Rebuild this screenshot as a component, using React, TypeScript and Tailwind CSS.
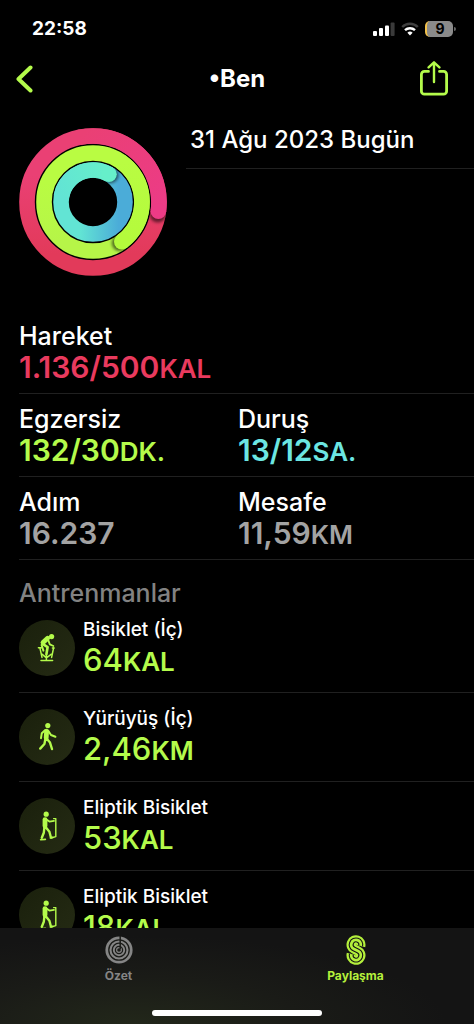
import type { ReactNode } from "react";

const rings = [
  { id: "move", radius: 66, angle: 98, from: "#ea4074", to: "#e23a5a", tip: "#ec3b86", dir: "vertical" },
  { id: "exercise", radius: 49, angle: 144, from: "#b9fc42", to: "#b6f548", tip: "#b4fb3c", dir: "vertical" },
  { id: "stand", radius: 32, angle: 30, from: "#62e4d4", to: "#4bacd8", tip: "#66efca", dir: "horizontal" },
];

const workouts = [
  { name: "Bisiklet (İç)", value: "64", unit: "KAL", icon: "bike" },
  { name: "Yürüyüş (İç)", value: "2,46", unit: "KM", icon: "walk" },
  { name: "Eliptik Bisiklet", value: "53", unit: "KAL", icon: "elliptical" },
  { name: "Eliptik Bisiklet", value: "18", unit: "KAL", icon: "elliptical" },
];

const sharePath = "M14.640 10.940A4.800 4.800 0 1 0 7.970 14.050L12.030 15.950A4.800 4.800 0 1 1 5.360 19.060";

function point(radius: number, angle: number) {
  const rad = ((angle - 90) * Math.PI) / 180;
  return { x: 74 + radius * Math.cos(rad), y: 74 + radius * Math.sin(rad) };
}

function ActivityRings() {
  return (
    <svg viewBox="0 0 148 148" className="h-[148px] w-[148px]" role="img" aria-label="Halkalar">
      <defs>
        <filter id="soft" x="-50%" y="-50%" width="200%" height="200%">
          <feGaussianBlur stdDeviation="1.8" />
        </filter>
      </defs>
      {rings.map((ring) => {
        const start = point(ring.radius, ring.angle - 110);
        const end = point(ring.radius, ring.angle);
        const shadow = point(ring.radius, ring.angle + 3);
        const horizontal = ring.dir === "horizontal";
        return (
          <g key={ring.id} fill="none">
            <linearGradient id={`${ring.id}-base`} x1="0" y1="0" x2={horizontal ? "1" : "0"} y2={horizontal ? "0" : "1"}>
              <stop offset="0.3" stopColor={ring.from} />
              <stop offset="0.9" stopColor={ring.to} />
            </linearGradient>
            <linearGradient
              id={`${ring.id}-tip`}
              gradientUnits="userSpaceOnUse"
              x1={start.x}
              y1={start.y}
              x2={end.x}
              y2={end.y}
            >
              <stop offset="0" stopColor={ring.from} />
              <stop offset="1" stopColor={ring.tip} />
            </linearGradient>
            <mask id={`${ring.id}-mask`} maskUnits="userSpaceOnUse" x="0" y="0" width="148" height="148">
              <circle cx="74" cy="74" r={ring.radius} stroke="white" strokeWidth="15.6" />
            </mask>
            <circle cx="74" cy="74" r={ring.radius} stroke={`url(#${ring.id}-base)`} strokeWidth="15.6" />
            <g mask={`url(#${ring.id}-mask)`}>
              <circle cx={shadow.x} cy={shadow.y} r="8" fill="#000" fillOpacity="0.55" filter="url(#soft)" />
            </g>
            <path
              d={`M${start.x} ${start.y}A${ring.radius} ${ring.radius} 0 0 1 ${end.x} ${end.y}`}
              stroke={`url(#${ring.id}-tip)`}
              strokeWidth="15.6"
            />
            <circle cx={end.x} cy={end.y} r="7.8" fill={ring.tip} />
          </g>
        );
      })}
    </svg>
  );
}

function WorkoutIcon({ name }: { name: string }) {
  return (
    <svg viewBox="0 0 56 56" className="h-14 w-14" fill="none" stroke="#b4fb4b" strokeLinecap="round" strokeLinejoin="round">
      {name === "bike" && (
        <>
          <circle cx="32.6" cy="16.6" r="2.6" fill="#b4fb4b" stroke="none" />
          <path d="M28.6 18.2L24 22.6" strokeWidth="4.8" />
          <path d="M29.4 20.4l1.400 4 3.600 1.600" strokeWidth="1.8" />
          <path d="M24 24.200l4.600 3-1.200 7" strokeWidth="2.6" />
          <path d="M22.600 25l1.800 5.600" strokeWidth="2" />
          <path d="M19.400 27.800h3M21 28.400l2 9M34.600 27.800l-2 9.600M33.400 28h1.800" strokeWidth="1.5" />
          <path d="M23 34.200l4.400 3.600 5-3.600M27.400 35v5M22 40.400h11.600" strokeWidth="1.5" />
        </>
      )}
      {name === "walk" && (
        <>
          <circle cx="28.8" cy="16.6" r="2.6" fill="#b4fb4b" stroke="none" />
          <path d="M27.600 22.200l-.4 6.600" strokeWidth="4.8" />
          <path d="M26 21.200l-3.200 3-.8 5M29.400 22l2.600 4 4.400 1.800" strokeWidth="2" />
          <path d="M28 30l3 3.600 2 6.400M26.400 30l-1 5-4.200 4.600" strokeWidth="2.4" />
        </>
      )}
      {name === "elliptical" && (
        <>
          <circle cx="27.2" cy="16.2" r="2.6" fill="#b4fb4b" stroke="none" />
          <path d="M26 21.600v6.400" strokeWidth="4.8" />
          <path d="M27.400 21.400l3 2.200 4.600-.8" strokeWidth="1.8" />
          <path d="M34.600 20.600h2.200v18l-4.600 1.400" strokeWidth="1.4" />
          <path d="M27 29.600l3.400 4.200 1.400 5.200M25.400 29.400l-.6 5.400-2 5" strokeWidth="2.4" />
          <path d="M21.600 41.800l4.800-.4M31.400 40l2.400-.6" strokeWidth="1.6" />
        </>
      )}
    </svg>
  );
}

function StatusIcons() {
  return (
    <div className="flex items-center gap-1.5">
      <svg viewBox="0 0 22 14" className="h-3.5 w-[22px]" fill="#fff">
        <rect x="0" y="9" width="4" height="5" rx="1" />
        <rect x="6" y="6" width="4" height="8" rx="1" />
        <rect x="12" y="3.500" width="4" height="10.500" rx="1" />
        <rect x="17.600" y="0.500" width="4" height="13.500" rx="1" fill="#3a3a3a" />
      </svg>
      <svg viewBox="0 0 18 14" className="h-3.5 w-[18px]" fill="none" strokeWidth="2.4">
        <path d="M1.200 5a11 11 0 0 1 15.600 0" stroke="#3f3f3f" />
        <path d="M4 8.200a7.200 7.200 0 0 1 10 0" stroke="#fff" />
        <path d="M6.400 10.700a3.800 3.800 0 0 1 5.200 0L9 13.600z" fill="#fff" />
      </svg>
      <div className="flex items-center gap-px">
        <div className="flex h-4 w-7 items-center justify-center overflow-hidden rounded-[5px] border-l-2 border-[#f2c14a] bg-[#8a8a8a] text-sm font-bold text-black">
          9
        </div>
        <div className="h-1 w-0.5 rounded-r bg-[#666]" />
      </div>
    </div>
  );
}

function Stat({ label, value, unit, color }: { label: string; value: string; unit?: string; color: string }) {
  return (
    <div>
      <dt className="text-[25px] leading-[30px] font-medium">{label}</dt>
      <dd className={`h-8 text-[30px] leading-8 font-semibold ${color}`}>
        {value}
        {unit && <span className="text-[26px] leading-[26px]">{unit}</span>}
      </dd>
    </div>
  );
}

function StatRow({ children }: { children: ReactNode }) {
  return <dl className="ml-[19px] grid grid-cols-[219px_1fr] border-b border-[#202020] py-2.5">{children}</dl>;
}

export default function App() {
  return (
    <div className="flex h-screen flex-col overflow-hidden bg-black font-['Inter',sans-serif] text-white">
      <div className="flex h-14 shrink-0 items-center justify-between pt-0.5 pr-[18px] pl-8">
        <span className="text-[19px] font-bold">22:58</span>
        <StatusIcons />
      </div>

      <header className="grid h-[46px] shrink-0 grid-cols-3 items-center px-4">
        <button aria-label="Geri" className="justify-self-start">
          <svg viewBox="0 0 17 28" className="h-7 w-[17px]" fill="none" stroke="#b4fb4b" strokeWidth="4" strokeLinecap="round" strokeLinejoin="round">
            <path d="M14.500 2.500L2.500 14l12 11.500" />
          </svg>
        </button>
        <h1 className="text-center text-2xl font-bold">•Ben</h1>
        <button aria-label="Paylaş" className="mr-2.5 justify-self-end">
          <svg viewBox="0 0 28 36" className="h-9 w-7" fill="none" stroke="#b4fb4b" strokeWidth="2.800" strokeLinecap="round" strokeLinejoin="round">
            <path d="M8.500 10.400H4.400a3 3 0 0 0-3 3v16.800a3 3 0 0 0 3 3h19.200a3 3 0 0 0 3-3V13.400a3 3 0 0 0-3-3h-4.100" />
            <path d="M14 21V1.500M8.600 6.400L14 1.300 19.400 6.400" strokeWidth="2.400" />
          </svg>
        </button>
      </header>

      <main className="min-h-0 flex-1 overflow-y-auto [scrollbar-width:none]">
        <section className="flex h-[209px] pt-[26px] pl-[19px]">
          <ActivityRings />
          <h2 className="-mt-3.5 ml-[19px] h-[55px] flex-1 border-b border-[#202020] pl-1 text-2xl leading-[52px] font-medium">
            31 Ağu 2023 Bugün
          </h2>
        </section>

        <StatRow>
          <Stat label="Hareket" value="1.136/500" unit="KAL" color="text-[#e93a5e]" />
        </StatRow>
        <StatRow>
          <Stat label="Egzersiz" value="132/30" unit="DK." color="text-[#b4fb4b]" />
          <Stat label="Duruş" value="13/12" unit="SA." color="text-[#6ce6e2]" />
        </StatRow>
        <StatRow>
          <Stat label="Adım" value="16.237" color="text-[#a3a3a3]" />
          <Stat label="Mesafe" value="11,59" unit="KM" color="text-[#a3a3a3]" />
        </StatRow>

        <section className="pt-[22px] pl-[19px]">
          <h2 className="text-[25px] leading-[22px] font-medium text-[#828282]">Antrenmanlar</h2>
          <ul>
            {workouts.map((workout, index) => (
              <li key={index} className="flex h-[89px] items-center gap-2 border-b border-[#202020]">
                <div className="rounded-full bg-linear-to-br from-[#1a200c] to-[#252b14]">
                  <WorkoutIcon name={workout.icon} />
                </div>
                <div>
                  <h3 className="text-[19px] leading-7 font-medium">{workout.name}</h3>
                  <p className="h-9 text-[31px] leading-8 font-medium text-[#b4fb4b]">
                    {workout.value}
                    <span className="text-[26px] leading-[26px] font-semibold">{workout.unit}</span>
                  </p>
                </div>
              </li>
            ))}
          </ul>
        </section>
      </main>

      <footer className="flex h-24 shrink-0 flex-col justify-between bg-[#151515] bg-[radial-gradient(ellipse_at_28%_100%,#22271a,#1a1b17_35%,#141414_65%)] pt-1.5 pb-2">
        <nav className="grid grid-cols-2 text-xs leading-4 font-bold">
          <a href="#ozet" className="flex flex-col items-center gap-0.5 text-[#858585]">
            <svg viewBox="0 0 28 28" className="h-8 w-7" fill="none">
              <circle cx="14" cy="14" r="13.6" fill="#858585" />
              <g stroke="#1b1c19" strokeWidth="1.3">
                <circle cx="14" cy="14" r="10.2" />
                <circle cx="14" cy="14" r="6.800" />
                <circle cx="14" cy="14" r="3.600" />
                <path d="M15.200 0v13" strokeWidth="1.500" />
              </g>
              <circle cx="14" cy="14" r="1.800" fill="#1b1c19" />
            </svg>
            Özet
          </a>
          <a href="#paylasma" aria-current="page" className="flex flex-col items-center gap-0.5 text-[#b4f03c]">
            <svg viewBox="0 0 20 30" className="h-8 w-5" fill="none">
              <path d={sharePath} stroke="#b4f03c" strokeWidth="9.400" />
              <path d={sharePath} stroke="#141414" strokeWidth="5" />
              <path d={sharePath} stroke="#b4f03c" strokeWidth="2.800" />
            </svg>
            Paylaşma
          </a>
        </nav>
        <div className="mx-auto h-1.5 w-[170px] rounded-full bg-white" />
      </footer>
    </div>
  );
}
